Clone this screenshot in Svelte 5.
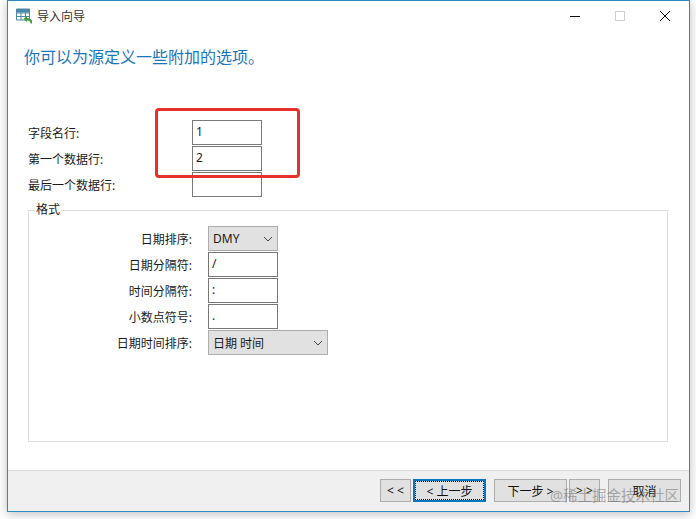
<script>
  const topRows = [
    { label: '字段名行:', value: '1' },
    { label: '第一个数据行:', value: '2' },
    { label: '最后一个数据行:', value: '' }
  ]
  const formatRows = [
    { label: '日期排序:', value: 'DMY', select: true },
    { label: '日期分隔符:', value: '/' },
    { label: '时间分隔符:', value: ':' },
    { label: '小数点符号:', value: '.' },
    { label: '日期时间排序:', value: '日期 时间', select: true, wide: true }
  ]
</script>

<div class="desktop">
  <div class="window">
    <div class="titlebar">
      <svg class="app-icon" width="16" height="16" viewBox="0 0 16 16">
        <rect x="0.5" y="1" width="13" height="3.5" fill="#4a8aa8" />
        <path d="M0.5 1h13v11h-13zM0.5 5h13M0.5 8.500h13M5 1v11M9.500 1v11" fill="none" stroke="#4a8aa8" stroke-width="1" />
        <path d="M15.500 15.500c0-3.500-2-4.500-5-4.500" fill="none" stroke="#3f9e3a" stroke-width="2" />
        <path d="M7.500 11l3.500-3v6z" fill="#3f9e3a" />
      </svg>
      <span class="title">导入向导</span>
      <div class="caption-buttons">
        <svg class="cap" width="12" height="12" viewBox="0 0 12 12"><path d="M1 6.500h10" stroke="#111" stroke-width="1" /></svg>
        <svg class="cap" width="12" height="12" viewBox="0 0 12 12"><rect x="1.500" y="1.500" width="9" height="9" fill="none" stroke="#ccc" /></svg>
        <svg class="cap" width="12" height="12" viewBox="0 0 12 12"><path d="M1 1l10 10M11 1L1 11" stroke="#111" stroke-width="1" /></svg>
      </div>
    </div>

    <div class="content">
      <h1>你可以为源定义一些附加的选项。</h1>

      <div class="top-rows">
        {#each topRows as row}
          <div class="top-row">
            <span class="top-label">{row.label}</span>
            <div class="field">{row.value}</div>
          </div>
        {/each}
      </div>

      <fieldset>
        <legend>格式</legend>
        <div class="format-rows">
          {#each formatRows as row}
            <div class="format-row">
              <span class="format-label">{row.label}</span>
              {#if row.select}
                <div class="select" class:wide={row.wide}>
                  <span>{row.value}</span>
                  <svg width="10" height="6" viewBox="0 0 10 6"><path d="M1 1l4 4 4-4" fill="none" stroke="#444" stroke-width="1" /></svg>
                </div>
              {:else}
                <div class="field dark">{row.value}</div>
              {/if}
            </div>
          {/each}
        </div>
      </fieldset>
    </div>

    <div class="footer">
      <button class="small">&lt; &lt;</button>
      <button class="main default">&lt; 上一步</button>
      <button class="main gap">下一步 &gt;</button>
      <button class="small next">&gt; &gt;</button>
      <button class="main gap">取消</button>
    </div>
  </div>

  <div class="highlight"></div>
  <div class="watermark">@稀土掘金技术社区</div>
</div>

<style>
  :global(body) {
    margin: 0;
    background: #fff;
    font-family: "Noto Sans", "Noto Sans CJK SC", sans-serif;
    font-size: 12px;
    color: #1a1a1a;
  }
  .desktop {
    position: relative;
    width: 696px;
    height: 519px;
    overflow: hidden;
    padding-left: 7px;
    box-sizing: border-box;
  }
  .window {
    width: 683px;
    height: 512px;
    box-sizing: border-box;
    border: 1px solid #2b8ac0;
    background: #fff;
    box-shadow: 0 2px 10px rgba(70, 70, 90, 0.35);
    display: flex;
    flex-direction: column;
  }
  .titlebar {
    height: 29px;
    display: flex;
    align-items: center;
    padding-left: 8px;
    flex-shrink: 0;
  }
  .app-icon { margin-right: 5px; }
  .title { color: #333; }
  .caption-buttons {
    margin-left: auto;
    display: flex;
    gap: 33px;
    padding-right: 18px;
  }
  .content {
    flex: 1;
    padding: 12px 19px 0 16px;
    min-height: 0;
  }
  h1 {
    margin: 0;
    height: 30px;
    line-height: 30px;
    font-size: 16px;
    font-weight: 400;
    color: #1a76bc;
  }
  .top-rows {
    margin-top: 48px;
    padding-left: 4px;
    display: flex;
    flex-direction: column;
    gap: 1px;
  }
  .top-row, .format-row {
    display: flex;
    align-items: center;
    height: 25px;
  }
  .top-label { width: 164px; }
  .field {
    width: 70px;
    height: 25px;
    box-sizing: border-box;
    border: 1px solid #7a7a7a;
    padding-left: 3px;
    line-height: 21px;
    background: #fff;
  }
  .field.dark { border-color: #777; }
  fieldset {
    margin: 6px 0 0 4px;
    padding: 0;
    width: 640px;
    height: 239px;
    box-sizing: border-box;
    border: 1px solid #dcdcdc;
    position: relative;
  }
  legend {
    margin-left: 6px;
    padding: 0 1px;
    line-height: 14px;
  }
  .format-rows {
    margin-top: 9px;
    display: flex;
    flex-direction: column;
    gap: 1px;
  }
  .format-label {
    width: 163px;
    text-align: right;
    margin-right: 16px;
  }
  .select {
    width: 70px;
    height: 25px;
    box-sizing: border-box;
    border: 1px solid #adadad;
    background: #e1e1e1;
    display: flex;
    align-items: center;
    justify-content: space-between;
    padding: 0 4px;
  }
  .select.wide { width: 120px; }
  .footer {
    height: 41px;
    flex-shrink: 0;
    box-sizing: border-box;
    background: #f0f0f0;
    border-top: 1px solid #dfdfdf;
    display: flex;
    align-items: flex-start;
    padding: 8px 8px 0 0;
    justify-content: flex-end;
  }
  button {
    height: 23px;
    box-sizing: border-box;
    border: 1px solid #adadad;
    background: #e1e1e1;
    font: inherit;
    color: #111;
    padding: 0;
    margin: 0;
  }
  .small { width: 31px; }
  .small.next { margin-left: 2px; }
  .main { width: 73px; margin-left: 2px; }
  .gap { margin-left: 8px; }
  .default {
    border: 2px solid #0a78c0;
    outline: 1px dotted #111;
    outline-offset: -3px;
  }
  .highlight {
    position: absolute;
    left: 155px;
    top: 108px;
    width: 145px;
    height: 70px;
    box-sizing: border-box;
    border: 3px solid #e8312a;
    border-radius: 4px;
  }
  .watermark {
    position: absolute;
    left: 550px;
    top: 486px;
    font-size: 14.500px;
    line-height: 18px;
    color: rgba(110, 110, 110, 0.55);
    white-space: nowrap;
  }
</style>
